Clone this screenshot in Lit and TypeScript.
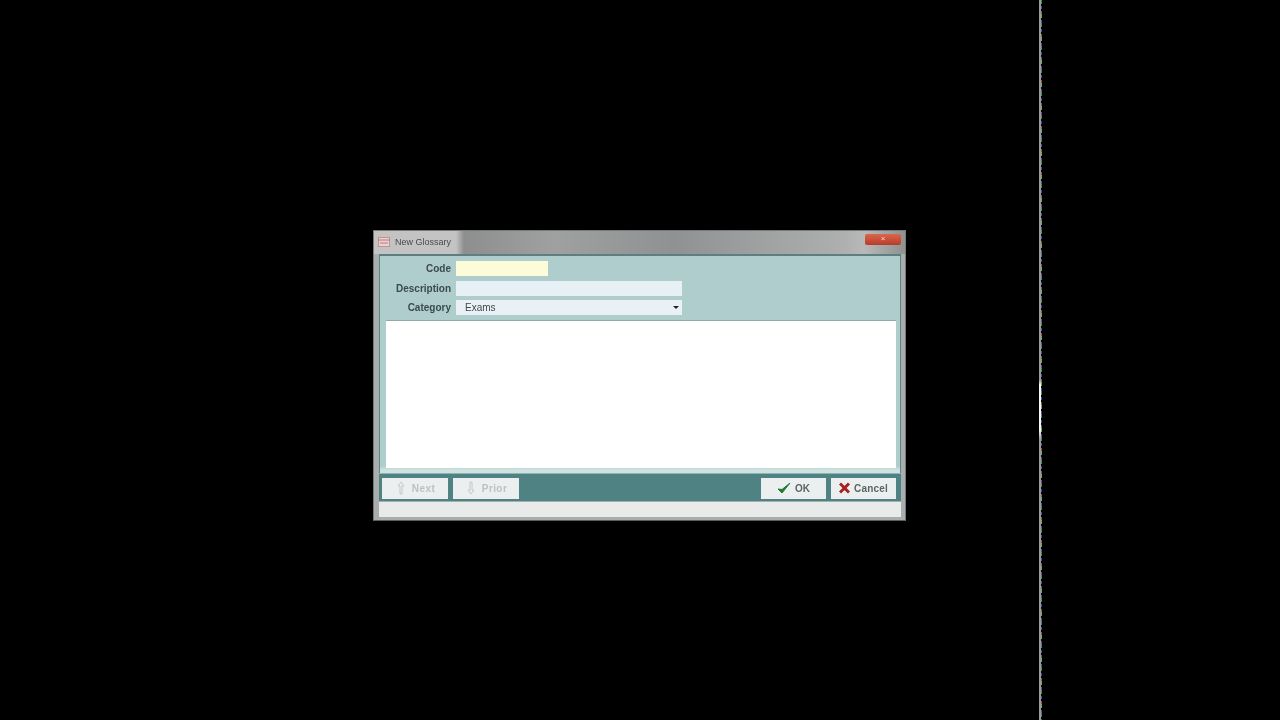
import { LitElement, html, css } from "lit";
import { customElement } from "lit/decorators.js";

@customElement("app-root")
export class AppRoot extends LitElement {
  static styles = css`
    :host { display: block; width: 1280px; height: 720px; background: #000; position: relative; overflow: hidden; font-family: "Liberation Sans", Arial, sans-serif; }
    .glitch { position: absolute; left: 1039px; top: 0; width: 2px; height: 720px;
      background: linear-gradient(180deg, #9a9a9a 0 380px, #f6f6f6 385px 430px, #9a9a9a 440px 100%); }
    .glitch-color { position: absolute; left: 1041px; top: 0; width: 1px; height: 720px;
      background: repeating-linear-gradient(180deg, #3f8f4f 0 4px, #000 4px 6px, #4b4aa6 6px 9px, #000 9px 11px, #8a5a4a 11px 14px, #6aaa6a 14px 18px, #000 18px 20px, #7a3f9a 20px 23px); }
    .window { position: absolute; left: 373px; top: 230px; width: 533px; height: 291px; box-sizing: border-box;
      background: #a9adad; display: flex; flex-direction: column; padding: 0 4px 3px 5px;
      border: 1px solid #77797a; border-bottom-color: #5c5e5e; filter: blur(0.5px); }
    .title { height: 23px; flex: none; display: flex; align-items: center; margin: 0 -4px 0 -5px; padding: 0 4px 2px 4px; box-sizing: border-box;
      background: linear-gradient(90deg, #c3c3c3 0 82px, #8d8f8f 90px, #9fa1a1 180px, #8f9292 300px, #aeb0b0 470px, #b8baba 490px, #8f9191 100%); }
    .title svg { flex: none; }
    .title-text { margin-left: 5px; font-size: 9px; color: #4a4a4a; flex: 1; }
    .close { width: 36px; height: 11px; margin-top: -5px; border-radius: 2px; background: linear-gradient(180deg, #d9674c, #b83c28); display: flex; align-items: center; justify-content: center; color: #f4dcd6; font-size: 8px; line-height: 1; }
    .panel { flex: 1; display: flex; flex-direction: column; min-height: 0; border-top: 2px solid #5d7f80; }
    .form { background: linear-gradient(180deg, #b0cdce 0 210px, #cfe2e0 214px); padding: 3px 4px 0 6px; display: flex; flex-direction: column; flex: 1; min-height: 0; border-left: 1px solid #5d8586; border-right: 1px solid #5d8586; }
    .row { display: flex; align-items: center; height: 19.6px; flex: none; gap: 5px; }
    .label { width: 65px; text-align: right; font-size: 10px; font-weight: 700; color: #3a4a4c; white-space: nowrap; }
    .input { height: 15px; background: #e6f0f5; box-sizing: border-box; }
    .code { width: 92px; background: #fdfcd8; }
    .wide { width: 226px; }
    .select { display: flex; align-items: center; justify-content: space-between; padding: 0 3px 0 9px; background: #eaf1f6; font-size: 10px; color: #3f484a; }
    .arrow { width: 0; height: 0; border-left: 3px solid transparent; border-right: 3px solid transparent; border-top: 3px solid #222; }
    .memo { flex: 1; background: #fff; margin: 2px 0 5px; min-height: 0; border-top: 1px solid #8fa9aa; }
    .toolbar { height: 28px; flex: none; background: #4f8283; display: flex; align-items: center; justify-content: space-between; padding: 1px 5px 0 3px; box-sizing: border-box; border-top: 1px solid #8fb4b4; }
    .group { display: flex; gap: 5px; }
    .btn { height: 21px; box-sizing: border-box; display: flex; align-items: center; justify-content: center; gap: 4px; font-size: 10px; font-weight: 700; background: #ecefef; color: #5c6465; }
    .nav { width: 66px; color: #bcc1c1; gap: 7px; letter-spacing: 0.4px; padding-left: 2px; }
    .ok { width: 65px; }
    .cancel { width: 65px; letter-spacing: 0.2px; }
    .status { height: 15px; flex: none; margin-top: 1px; background: #e9ebeb; }
  `;

  render() {
    return html`
      <div class="glitch"></div>
      <div class="glitch-color"></div>
      <div class="window">
        <div class="title">
          <svg width="12" height="10" viewBox="0 0 12 10"><rect x="0.5" y="0.5" width="11" height="9" fill="#e4d5d5" stroke="#c79090"/><path d="M0 3h12M2 6h8" stroke="#cc7070" fill="none"/></svg>
          <span class="title-text">New Glossary</span>
          <span class="close">×</span>
        </div>
        <div class="panel">
          <div class="form">
            <div class="row"><span class="label">Code</span><div class="input code"></div></div>
            <div class="row"><span class="label">Description</span><div class="input wide"></div></div>
            <div class="row"><span class="label">Category</span><div class="input wide select"><span>Exams</span><span class="arrow"></span></div></div>
            <div class="memo"></div>
          </div>
          <div class="toolbar">
            <div class="group">
              <div class="btn nav">
                <svg width="8" height="14" viewBox="0 0 8 14"><path d="M4 1L7 5H5V13H3V5H1Z" fill="none" stroke="#c3c8c8"/></svg>
                <span>Next</span>
              </div>
              <div class="btn nav">
                <svg width="8" height="14" viewBox="0 0 8 14"><path d="M4 13L7 9H5V1H3V9H1Z" fill="none" stroke="#c3c8c8"/></svg>
                <span>Prior</span>
              </div>
            </div>
            <div class="group">
              <div class="btn ok">
                <svg width="14" height="12" viewBox="0 0 14 12"><path d="M1 7L5 11L13 1L5 7.5Z" fill="#1f7a34" stroke="#1f7a34"/></svg>
                <span>OK</span>
              </div>
              <div class="btn cancel">
                <svg width="11" height="12" viewBox="0 0 11 12"><path d="M1 1.5L10 10.5M10 1.5L1 10.5" stroke="#a82020" stroke-width="3"/></svg>
                <span>Cancel</span>
              </div>
            </div>
          </div>
          <div class="status"></div>
        </div>
      </div>
    `;
  }
}
